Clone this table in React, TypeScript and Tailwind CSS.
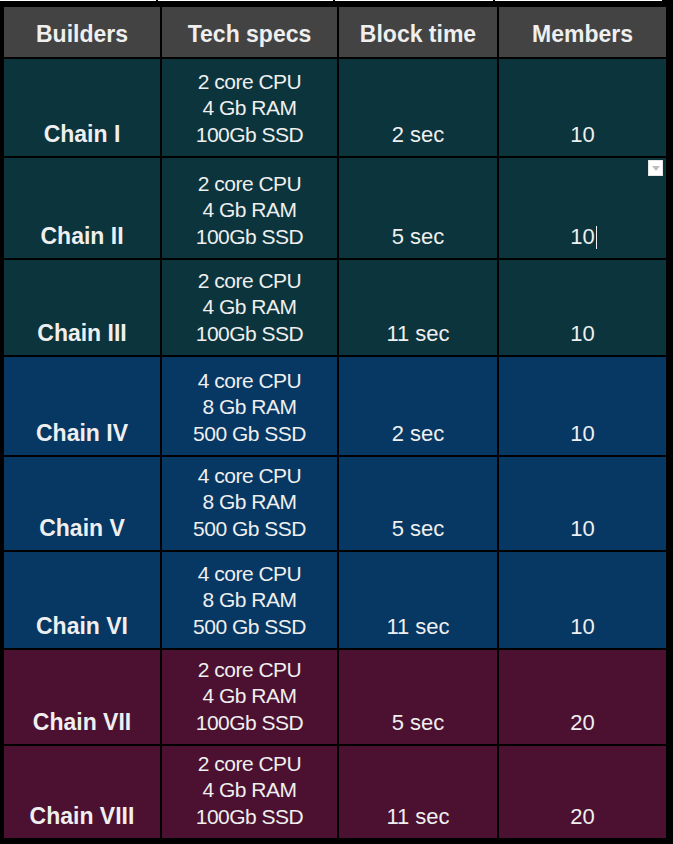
import React from "react";

type Row = {
  name: string;
  specs: string[];
  time: string;
  members: string;
  bg: string;
  h: number;
  cursor?: boolean;
};

const rows: Row[] = [
  { name: "Chain I", specs: ["2 core CPU", "4 Gb RAM", "100Gb SSD"], time: "2 sec", members: "10", bg: "bg-[#0c343d]", h: 97 },
  { name: "Chain II", specs: ["2 core CPU", "4 Gb RAM", "100Gb SSD"], time: "5 sec", members: "10", bg: "bg-[#0c343d]", h: 100, cursor: true },
  { name: "Chain III", specs: ["2 core CPU", "4 Gb RAM", "100Gb SSD"], time: "11 sec", members: "10", bg: "bg-[#0c343d]", h: 95 },
  { name: "Chain IV", specs: ["4 core CPU", "8 Gb RAM", "500 Gb SSD"], time: "2 sec", members: "10", bg: "bg-[#073763]", h: 98 },
  { name: "Chain V", specs: ["4 core CPU", "8 Gb RAM", "500 Gb SSD"], time: "5 sec", members: "10", bg: "bg-[#073763]", h: 93 },
  { name: "Chain VI", specs: ["4 core CPU", "8 Gb RAM", "500 Gb SSD"], time: "11 sec", members: "10", bg: "bg-[#073763]", h: 96 },
  { name: "Chain VII", specs: ["2 core CPU", "4 Gb RAM", "100Gb SSD"], time: "5 sec", members: "20", bg: "bg-[#4c1130]", h: 94 },
  { name: "Chain VIII", specs: ["2 core CPU", "4 Gb RAM", "100Gb SSD"], time: "11 sec", members: "20", bg: "bg-[#4c1130]", h: 92 },
];

const cols = "grid grid-cols-[156px_175px_158px_167px] gap-x-[2px]";

export default function App() {
  return (
    <div
      className="w-[673px] h-[844px] bg-black text-[#efefef] overflow-hidden"
      style={{ fontFamily: '"Liberation Sans", Arial, sans-serif' }}
    >
      <div className={`${cols} h-[1px]`}>
        <div className="bg-white -ml-[4px]" />
        <div className="bg-white" />
        <div className="bg-white" />
        <div className="bg-white" />
      </div>
      <div className="pl-[4px] pt-[6px] flex flex-col gap-y-[2px]">
        <div className={`${cols} h-[50px]`}>
          {["Builders", "Tech specs", "Block time", "Members"].map((t) => (
            <div
              key={t}
              className="bg-[#434343] flex items-center justify-center text-[23px] font-bold leading-none pt-[4px]"
            >
              {t}
            </div>
          ))}
        </div>
        {rows.map((r) => (
          <div key={r.name} className={cols} style={{ height: r.h }}>
            <div className={`${r.bg} flex items-end justify-center pb-[9px] text-[23px] font-bold leading-[26.5px]`}>
              {r.name}
            </div>
            <div className={`${r.bg} flex flex-col items-center justify-end pb-[8px] text-[21px] tracking-[-0.5px] leading-[26.5px]`}>
              {r.specs.map((s) => (
                <div key={s}>{s}</div>
              ))}
            </div>
            <div className={`${r.bg} flex items-end justify-center pb-[8px] text-[22px] leading-[26.5px]`}>
              {r.time}
            </div>
            <div className={`${r.bg} relative flex items-end justify-center pb-[8px] text-[22px] leading-[26.5px]`}>
              <span className="relative">
                {r.members}
                {r.cursor && (
                  <span className="absolute left-full top-[2px] ml-[1px] w-[1px] h-[23px] bg-[#efefef]" />
                )}
              </span>
              {r.cursor && (
                <div className="absolute top-[2px] right-[3px] w-[15px] h-[16px] bg-white border border-[#e6e6e6] flex items-center justify-center">
                  <div className="w-0 h-0 border-l-[4px] border-r-[4px] border-t-[5px] border-l-transparent border-r-transparent border-t-[#bdbdbd]" />
                </div>
              )}
            </div>
          </div>
        ))}
      </div>
    </div>
  );
}
